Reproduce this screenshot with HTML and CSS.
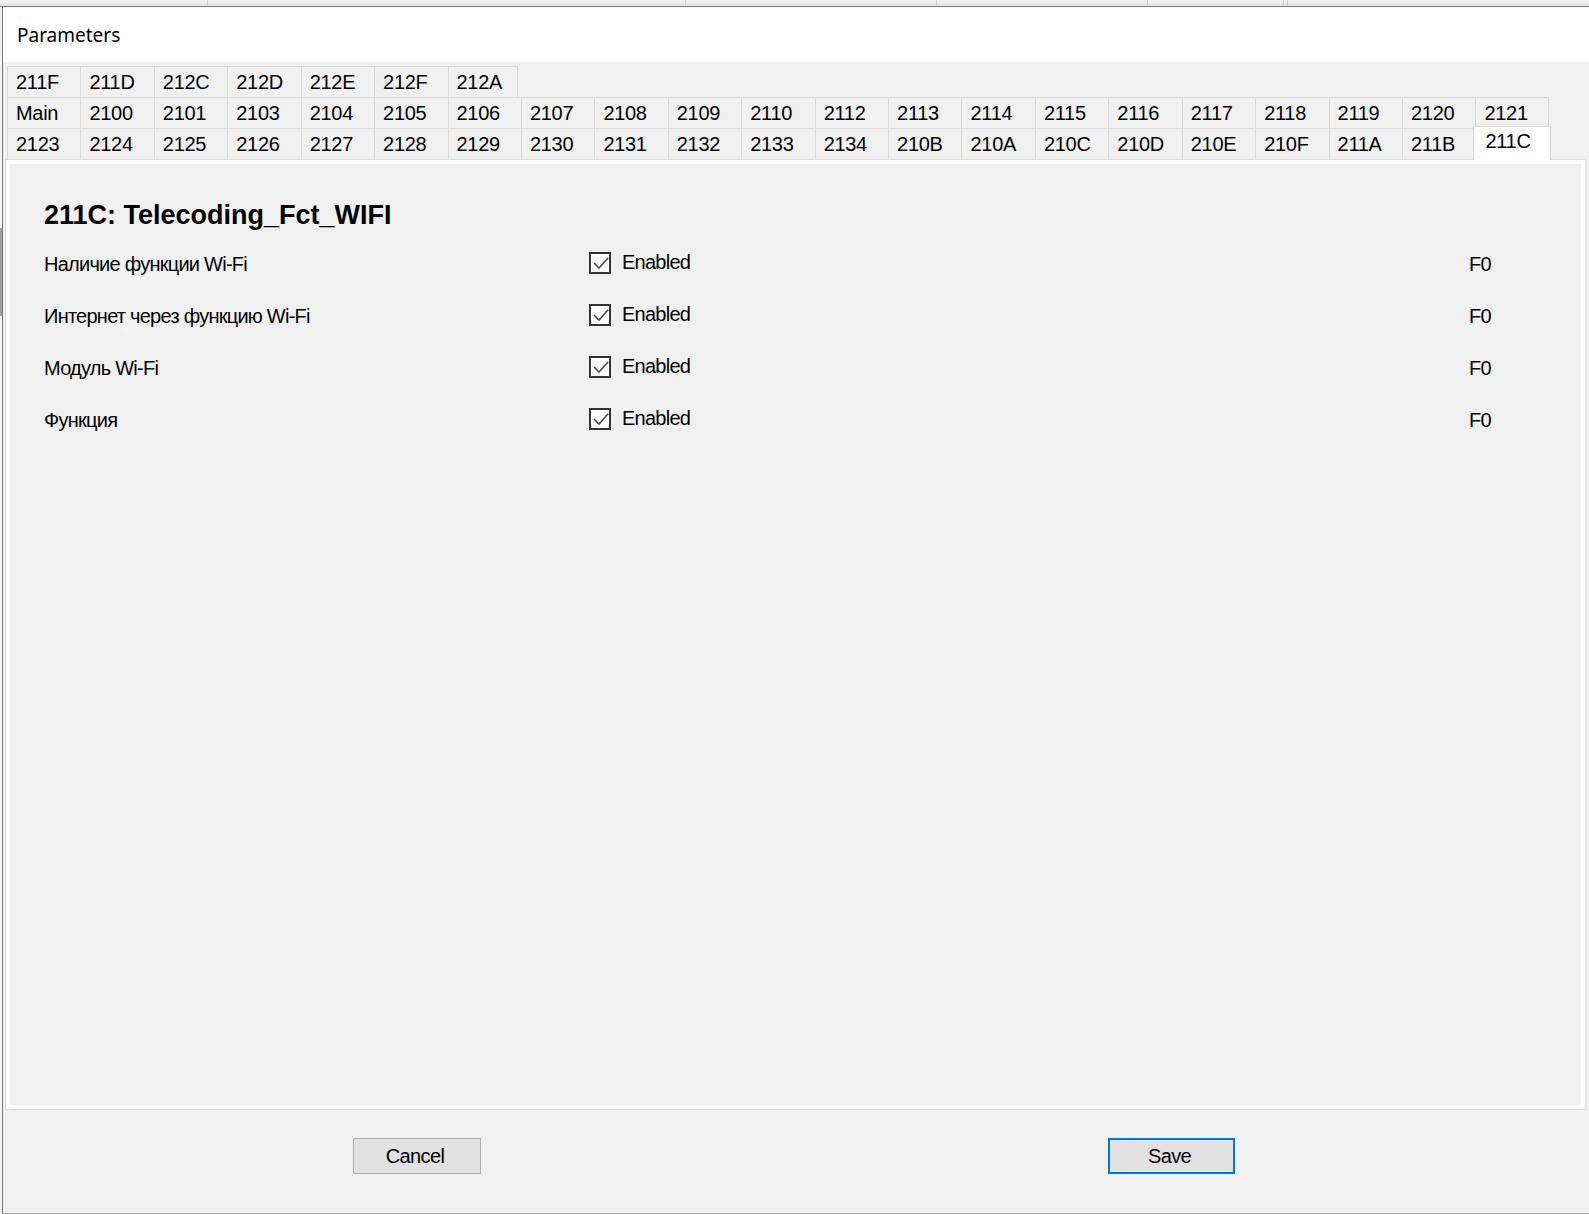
FILE: index.html
```html
<!DOCTYPE html>
<html lang="ru">
<head>
<meta charset="utf-8">
<title>Parameters</title>
<link rel="stylesheet" href="styles.css">
</head>
<body>
<div class="behind">
  <span class="behind-cell c1"></span>
  <span class="behind-cell c2"></span>
  <span class="behind-cell c3"></span>
  <span class="behind-cell c4"></span>
  <span class="behind-cell c5"></span>
  <span class="behind-cell c6"></span>
  <span class="behind-cell c7"></span>
</div>
<div class="stage">
  <div class="gutter"><div class="gutter-thumb"></div></div>
  <div class="window">
    <div class="titlebar">Parameters</div>
    <div class="client">
      <div class="tabcontrol">
        <div class="tabstrip">
          <div class="tabrow">
            <div class="tab">211F</div><div class="tab">211D</div><div class="tab">212C</div><div class="tab">212D</div><div class="tab">212E</div><div class="tab">212F</div><div class="tab tab-short">212A</div>
          </div>
          <div class="tabrow">
            <div class="tab">Main</div><div class="tab">2100</div><div class="tab">2101</div><div class="tab">2103</div><div class="tab">2104</div><div class="tab">2105</div><div class="tab">2106</div><div class="tab">2107</div><div class="tab">2108</div><div class="tab">2109</div><div class="tab">2110</div><div class="tab">2112</div><div class="tab">2113</div><div class="tab">2114</div><div class="tab">2115</div><div class="tab">2116</div><div class="tab">2117</div><div class="tab">2118</div><div class="tab">2119</div><div class="tab">2120</div><div class="tab">2121</div>
          </div>
          <div class="tabrow">
            <div class="tab">2123</div><div class="tab">2124</div><div class="tab">2125</div><div class="tab">2126</div><div class="tab">2127</div><div class="tab">2128</div><div class="tab">2129</div><div class="tab">2130</div><div class="tab">2131</div><div class="tab">2132</div><div class="tab">2133</div><div class="tab">2134</div><div class="tab">210B</div><div class="tab">210A</div><div class="tab">210C</div><div class="tab">210D</div><div class="tab">210E</div><div class="tab">210F</div><div class="tab">211A</div><div class="tab">211B</div><div class="tab tab-active">211C</div>
          </div>
        </div>
        <div class="tabpage-frame">
          <div class="tabpage">
            <h1 class="page-title">211C: Telecoding_Fct_WIFI</h1>
            <div class="params">
              <div class="param-label">Наличие функции Wi-Fi</div>
              <div class="param-check"><span class="checkbox"><svg class="checkmark" viewBox="0 0 18 18"><polyline points="3,9 8,14 17,4"/></svg></span><span class="check-text">Enabled</span></div>
              <div class="param-value">F0</div>

              <div class="param-label">Интернет через функцию Wi-Fi</div>
              <div class="param-check"><span class="checkbox"><svg class="checkmark" viewBox="0 0 18 18"><polyline points="3,9 8,14 17,4"/></svg></span><span class="check-text">Enabled</span></div>
              <div class="param-value">F0</div>

              <div class="param-label">Модуль Wi-Fi</div>
              <div class="param-check"><span class="checkbox"><svg class="checkmark" viewBox="0 0 18 18"><polyline points="3,9 8,14 17,4"/></svg></span><span class="check-text">Enabled</span></div>
              <div class="param-value">F0</div>

              <div class="param-label">Функция</div>
              <div class="param-check"><span class="checkbox"><svg class="checkmark" viewBox="0 0 18 18"><polyline points="3,9 8,14 17,4"/></svg></span><span class="check-text">Enabled</span></div>
              <div class="param-value">F0</div>
            </div>
          </div>
        </div>
      </div>
      <div class="buttons">
        <button class="btn btn-cancel">Cancel</button>
        <button class="btn btn-save">Save</button>
      </div>
    </div>
  </div>
</div>
</body>
</html>
```

FILE: styles.css
```css
html, body {
  margin: 0;
  height: 1214px;
  overflow: hidden;
}

body {
  width: 1589px;
  background: #f0f0f0;
  font-family: "Liberation Sans", Arial, sans-serif;
  color: #000;
}

/* header strip of the window underneath */
.behind {
  display: flex;
  height: 6px;
  background: linear-gradient(#f4f4f4, #e2e2e2);
}

.behind-cell {
  box-sizing: border-box;
  height: 6px;
  border-right: 1px solid #cfcfcf;
}

.c1 { width: 208px; }
.c2 { width: 478px; }
.c3 { width: 251px; }
.c4 { width: 211px; }
.c5 { width: 136px; }
.c6 { width: 4px; }
.c7 { flex: 1; border-right: none; }

.stage {
  display: flex;
  height: 1207px;
  border-top: 1px solid #7c7c7c;
}

.gutter {
  width: 2px;
  background: #f4f4f4;
}

.gutter-thumb {
  margin-top: 221px;
  height: 88px;
  background: #9d9d9d;
}

/* dialog window */
.window {
  flex: 1;
  display: flex;
  flex-direction: column;
  border-left: 1px solid #777;
  border-bottom: 1px solid #a8a8a8;
}

.titlebar {
  box-sizing: border-box;
  height: 55px;
  flex: none;
  display: flex;
  align-items: center;
  padding: 2px 0 0 14px;
  background: #fff;
  font-family: "Noto Sans", "Open Sans", sans-serif;
  font-size: 19px;
  line-height: 1;
}

.client {
  flex: 1;
  display: flex;
  flex-direction: column;
  padding-top: 4px;
  background: #f0f0f0;
}

.tabcontrol {
  margin: 0 3px 0 2px;
}

.tabstrip {
  padding-left: 2px;
}

.tabrow {
  display: flex;
  height: 31px;
}

.tab {
  box-sizing: border-box;
  flex: none;
  width: 73.43px;
  height: 31px;
  padding-left: 8px;
  border-top: 1px solid #d9d9d9;
  border-left: 1px solid #d9d9d9;
  background: #f0f0f0;
  font-size: 20px;
  letter-spacing: -0.3px;
  line-height: 30px;
  white-space: nowrap;
}

.tab.tab-short {
  width: 70px;
}

.tabrow .tab:last-child {
  border-right: 1px solid #d9d9d9;
}

.tab.tab-active {
  position: relative;
  z-index: 1;
  width: 77.43px;
  height: 34px;
  margin: -2px -2px 0 -2px;
  padding-left: 11px;
  border: 1px solid #d9d9d9;
  border-bottom: none;
  background: #fff;
  line-height: 28px;
}

.tabpage-frame {
  box-sizing: border-box;
  height: 951px;
  padding: 4px;
  border: 1px solid #d9d9d9;
  background: #fff;
}

.tabpage {
  box-sizing: border-box;
  height: 100%;
  padding: 35px 0 0 34px;
  background: #f0f0f0;
}

.page-title {
  margin: 0;
  height: 32px;
  font-size: 27px;
  font-weight: bold;
  line-height: 32px;
}

.params {
  display: grid;
  grid-template-columns: 545px 880px auto;
  grid-auto-rows: 52px;
  align-items: center;
  margin-top: 6px;
  font-size: 20px;
  letter-spacing: -0.75px;
  line-height: 24px;
}

.param-label {
  padding-top: 2px;
}

.param-check {
  display: flex;
  align-items: center;
  gap: 11px;
}

.checkbox {
  box-sizing: border-box;
  display: flex;
  width: 22px;
  height: 22px;
  border: 2px solid #333;
  background: #fff;
}

.checkmark {
  width: 18px;
  height: 18px;
  fill: none;
  stroke: #4a4a4a;
  stroke-width: 1.6;
}

.check-text {
  margin-bottom: 3px;
}

.param-value {
  padding-top: 2px;
}

.buttons {
  display: flex;
  padding: 28px 0 0 350px;
}

.btn {
  box-sizing: border-box;
  width: 128px;
  height: 36px;
  padding: 0 4px 0 0;
  border: 1px solid #adadad;
  background: #e1e1e1;
  color: #000;
  font-family: "Liberation Sans", Arial, sans-serif;
  font-size: 20px;
  letter-spacing: -0.6px;
}

.btn-save {
  width: 127px;
  margin-left: 627px;
  border: 2px solid #0078d7;
}
```
